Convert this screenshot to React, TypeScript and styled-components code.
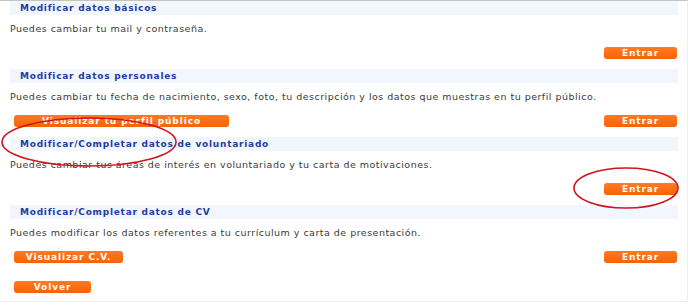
import styled, { createGlobalStyle } from "styled-components";

const GlobalStyle = createGlobalStyle`
  body {
    margin: 0;
    background: #ffffff;
    font-family: "DejaVu Sans", Verdana, sans-serif;
  }
`;

type Action = { label: string; width: number };

type Block = {
  title: string;
  text: string;
  left?: Action;
};

const BLOCKS: Block[] = [
  {
    title: "Modificar datos básicos",
    text: "Puedes cambiar tu mail y contraseña.",
  },
  {
    title: "Modificar datos personales",
    text: "Puedes cambiar tu fecha de nacimiento, sexo, foto, tu descripción y los datos que muestras en tu perfil público.",
    left: { label: "Visualizar tu perfil público", width: 215 },
  },
  {
    title: "Modificar/Completar datos de voluntariado",
    text: "Puedes cambiar tus áreas de interés en voluntariado y tu carta de motivaciones.",
  },
  {
    title: "Modificar/Completar datos de CV",
    text: "Puedes modificar los datos referentes a tu currículum y carta de presentación.",
    left: { label: "Visualizar C.V.", width: 109 },
  },
];

export default function App() {
  return (
    <>
      <GlobalStyle />
      <Page>
        <Panel>
          {BLOCKS.map((block) => (
            <Section key={block.title}>
              <Title>{block.title}</Title>
              <Text>{block.text}</Text>
              <ButtonRow>
                {block.left ? (
                  <Button $width={block.left.width}>{block.left.label}</Button>
                ) : (
                  <span />
                )}
                <Button $width={73}>Entrar</Button>
              </ButtonRow>
            </Section>
          ))}
          <BackRow>
            <Button $width={77}>Volver</Button>
          </BackRow>
        </Panel>
        <Marks width="692" height="304" viewBox="0 0 692 304">
          <ellipse cx="89" cy="142" rx="87" ry="24" />
          <ellipse cx="626" cy="188" rx="52" ry="20" />
        </Marks>
      </Page>
    </>
  );
}

const Page = styled.div`
  position: relative;
  width: 692px;
  height: 304px;
  overflow: hidden;
`;

const Panel = styled.div`
  width: 668px;
  height: 300px;
  padding: 0 9px 0 10px;
  border: 1px solid #eeeeee;
  border-top: 1px solid #c4c4c4;
  border-left: none;
  box-sizing: content-box;
  display: flex;
  flex-direction: column;
`;

const Section = styled.div`
  display: flex;
  flex-direction: column;
  padding-bottom: 10px;
`;

const Title = styled.div`
  height: 14px;
  line-height: 14px;
  padding-left: 10px;
  background: #f2f7fd;
  color: #1b3da6;
  font-size: 9px;
  font-weight: bold;
  letter-spacing: 0.75px;
  white-space: nowrap;
`;

const Text = styled.div`
  margin-top: 7px;
  height: 14px;
  line-height: 14px;
  color: #3a3a3a;
  font-size: 9.5px;
  letter-spacing: 0.48px;
  white-space: nowrap;
`;

const ButtonRow = styled.div`
  margin-top: 11px;
  padding: 0 1px 0 4px;
  display: flex;
  justify-content: space-between;
  align-items: center;
`;

const BackRow = styled.div`
  margin-top: 8px;
  padding-left: 4px;
  display: flex;
`;

const Button = styled.div<{ $width: number }>`
  width: ${({ $width }) => $width}px;
  height: 12px;
  line-height: 12px;
  border-radius: 3px;
  background: linear-gradient(#ff7a22, #f86207);
  color: #ffffff;
  font-size: 9px;
  font-weight: bold;
  letter-spacing: 0.9px;
  text-align: center;
  white-space: nowrap;
  overflow: hidden;
  cursor: pointer;
`;

const Marks = styled.svg`
  position: absolute;
  left: 0;
  top: 0;
  pointer-events: none;
  fill: none;
  stroke: #d2121c;
  stroke-width: 1.6;
`;
